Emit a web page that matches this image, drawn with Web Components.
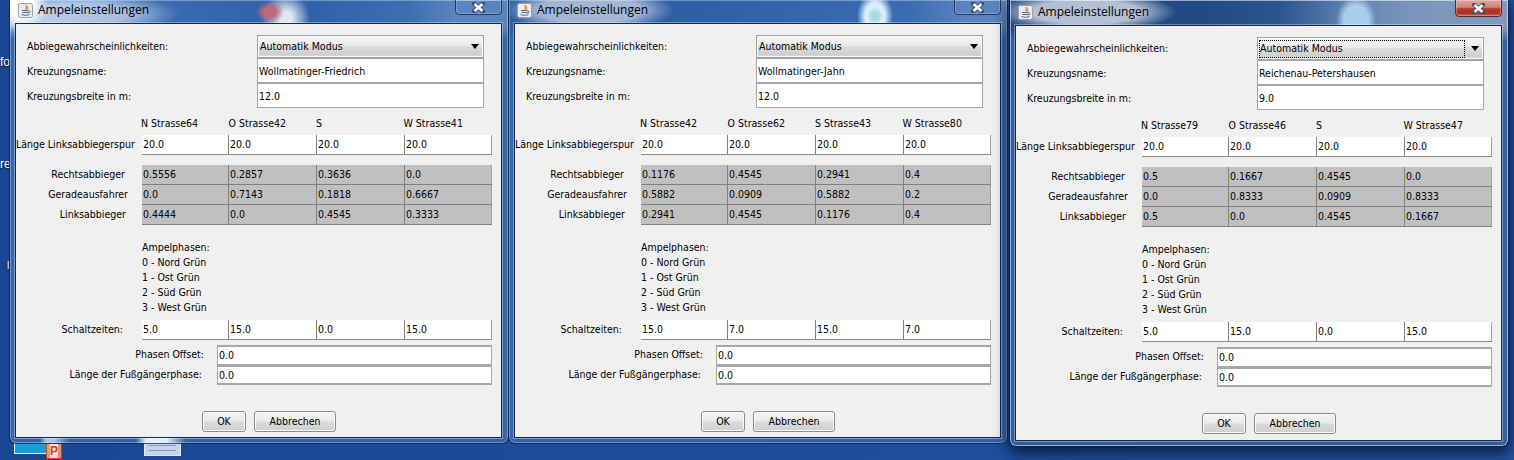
<!DOCTYPE html>
<html lang="de">
<head>
<meta charset="utf-8">
<title>Ampeleinstellungen</title>
<style>
  html, body { margin: 0; height: 100%; overflow: hidden; }
  body {
    background: #1c4a98;
    color: #000;
    font: 10.5px/15px "DejaVu Sans Condensed", "DejaVu Sans", sans-serif;
  }
  desk-top { width: 1514px; height: 460px; }
</style>
</head>
<body>
<desk-top>
  <ampel-window slot="win" caption="Ampeleinstellungen" style="left:10px;width:498px;height:443px;--pad-top:24px;--glass:
      linear-gradient(90deg, transparent 30px, rgba(190,235,255,.75) 36px 44px, transparent 60px 126px, rgba(230,250,255,.95) 136px 156px, transparent 176px) 0 100% / 100% 6px no-repeat,
      linear-gradient(180deg, transparent 26px, #3667ad 40px, #3667ad 437px, #2f5ea5 443px),
      radial-gradient(ellipse 28px 30px at 10px 4px, #fff 45%, transparent),
      radial-gradient(ellipse 14px 11px at 260px 12px, #bd6a78 40%, transparent),
      radial-gradient(ellipse 24px 26px at 276px 18px, rgba(255,255,255,.85) 25%, transparent),
      radial-gradient(ellipse 100px 20px at 70px 14px, rgba(255,255,255,.5) 50%, transparent),
      linear-gradient(90deg, #7ea6da 0, #5f8fcc 70px, #3a6cb2 150px, #2f60a8 290px, #3e6fb3 400px, #5a85be 445px, #5c84bc 498px);">
    <ampel-form name="Wollmatinger-Friedrich" breite="12.0"
      heads="N Strasse64|O Strasse42|S|W Strasse41"
      rechts="0.5556|0.2857|0.3636|0.0" gerade="0.0|0.7143|0.1818|0.6667" links="0.4444|0.0|0.4545|0.3333"
      zeiten="5.0|15.0|0.0|15.0"></ampel-form>
  </ampel-window>

  <ampel-window slot="win" caption="Ampeleinstellungen" style="left:509px;width:498px;height:443px;--pad-top:24px;--glass:
      linear-gradient(180deg, transparent 26px, #3667ad 40px, #3667ad 437px, #2f5ea5 443px),
      radial-gradient(ellipse 8px 9px at 366px 16px, #a6d8e2 40%, transparent),
      radial-gradient(ellipse 18px 24px at 366px 16px, rgba(225,245,255,.95) 55%, transparent),
      radial-gradient(ellipse 85px 22px at 80px 10px, rgba(205,218,235,.72) 60%, transparent),
      linear-gradient(90deg, #2e5c9f 0, #2f5fa4 190px, #3667ad 300px, #3a6cb2 400px, #5a82bc 455px, #5c84bc 498px);">
    <ampel-form name="Wollmatinger-Jahn" breite="12.0"
      heads="N Strasse42|O Strasse62|S Strasse43|W Strasse80"
      rechts="0.1176|0.4545|0.2941|0.4" gerade="0.5882|0.0909|0.5882|0.2" links="0.2941|0.4545|0.1176|0.4"
      zeiten="15.0|7.0|15.0|7.0"></ampel-form>
  </ampel-window>

  <ampel-window slot="win" active caption="Ampeleinstellungen" style="left:1010px;width:498px;height:446px;--pad-top:26px;--title-y:2px;--glass:
      linear-gradient(180deg, transparent 28px, #31609f 42px, #31609f 440px, #2b5a9c 446px),
      radial-gradient(ellipse 20px 24px at 346px 20px, rgba(175,210,240,.95) 60%, transparent),
      radial-gradient(ellipse 90px 20px at 76px 12px, rgba(215,222,232,.8) 60%, transparent),
      linear-gradient(90deg, #24497f 0, #234a85 200px, #2c5590 270px, #5d80b0 335px, #7a96bc 400px, #8299ba 498px);">
    <ampel-form focused name="Reichenau-Petershausen" breite="9.0"
      heads="N Strasse79|O Strasse46|S|W Strasse47"
      rechts="0.5|0.1667|0.4545|0.0" gerade="0.0|0.8333|0.0909|0.8333" links="0.5|0.0|0.4545|0.1667"
      zeiten="5.0|15.0|0.0|15.0"></ampel-form>
  </ampel-window>
</desk-top>

<script>
// desktop behind the dialogs: scraps of icon captions and task icons
const deskTemplate = document.createElement("template");
deskTemplate.innerHTML = `
  <style>
    :host { display: block; position: relative; overflow: hidden; background: linear-gradient(90deg, #1a4793, #1d4c9b 50%, #1f519f); }
    .scrap { position: absolute; left: 0; color: #fff; font: 12px/14px "Liberation Sans", sans-serif; text-shadow: 0 1px 2px #000; }
    .tile { position: absolute; box-sizing: border-box; }
    .cyan { left: 14px; top: 440px; width: 33px; height: 14px; background: linear-gradient(180deg, #1f9bd8, #13a2d6); border: 1px solid #d9f1fb; }
    .ppt { left: 46px; top: 443px; width: 16px; height: 16px; background: linear-gradient(135deg, #f2a278, #e58a5c); border: 1px solid #c8431a; color: #fff; }
    .ppt b { display: block; font: bold 12px/14px "Liberation Sans", sans-serif; text-align: center; color: #c8431a; background: #fbe3d4; margin: 0 3px; }
    .note { left: 144px; top: 438px; width: 37px; height: 18px; background: #c9d3ea; border: 1px solid #e3e9f5; }
    .note::before, .note::after { content: ""; position: absolute; left: 3px; right: 4px; height: 1px; background: #7f97c4; }
    .note::before { top: 6px; }
    .note::after { top: 11px; }
  </style>
  <span class="scrap" style="top:55px">fo</span>
  <span class="scrap" style="top:157px">re</span>
  <span class="scrap" style="top:259px;left:7px;font-size:10px">l</span>
  <div class="tile cyan"></div>
  <div class="tile ppt"><b>P</b></div>
  <div class="tile note"></div>
  <slot name="win"></slot>
`;

class DeskTop extends HTMLElement {
  constructor() {
    super();
    this.attachShadow({ mode: "open" });
    this.shadowRoot.appendChild(deskTemplate.content.cloneNode(true));
  }
}
customElements.define("desk-top", DeskTop);

const windowTemplate = document.createElement("template");
windowTemplate.innerHTML = `
  <style>
    :host {
      display: block;
      position: absolute;
      top: 0;
      box-sizing: border-box;
      padding: var(--pad-top) 7px 6px 6px;
      background: var(--glass);
      border-radius: 0 0 6px 6px;
      box-shadow: 0 0 0 1px rgba(12,32,70,.75), inset 0 0 0 1px rgba(255,255,255,.32);
    }
    :host([active]) {
      box-shadow: 0 0 0 1px rgba(12,32,70,.8), inset 0 0 0 1px rgba(255,255,255,.55), 0 5px 14px 2px rgba(3,12,40,.75);
    }
    .icon { position: absolute; left: 8px; top: calc(3px + var(--title-y, 0px)); width: 15px; height: 15px; }
    .caption {
      position: absolute;
      left: 28px;
      top: calc(2px + var(--title-y, 0px));
      font: 12px/16px "Open Sans", sans-serif;
      color: #000;
      white-space: nowrap;
    }
    .close {
      position: absolute;
      right: 6px;
      top: -1px;
      width: 47px;
      height: calc(16px + var(--title-y, 0px));
      box-sizing: border-box;
      display: flex;
      align-items: center;
      justify-content: center;
      border: 1px solid rgba(25,45,85,.85);
      border-radius: 0 0 4px 4px;
      box-shadow: inset 0 0 0 1px rgba(255,255,255,.22);
    }
    :host([active]) .close {
      border-color: #5b2a25;
      background: linear-gradient(180deg, #d9a79f 0, #cf8378 45%, #b83a2a 55%, #a9301f 80%, #c8604e 100%);
      box-shadow: inset 0 0 0 1px rgba(255,255,255,.3);
    }
    .content {
      height: 100%;
      box-sizing: border-box;
      background: #f0f0f0;
      box-shadow: 0 0 0 1px #16294a, 0 0 0 2px rgba(255,255,255,.35);
    }
  </style>
  <svg class="icon" viewBox="0 0 15 15">
    <rect x=".5" y=".5" width="14" height="14" rx="2" fill="#ececec" stroke="#9aa0a8"/>
    <path d="M8.5 2C7 3.5 9.5 4.5 7.5 6.5M10 3.5C9 4.5 10.5 5 9.5 6.5" fill="none" stroke="#e2701c" stroke-width="1.1"/>
    <path d="M4 7.5h6.5M4.5 9.5h5.5M3.5 11.5c2 1 6 1 8 0M10.5 8c2-.5 2 2 -.5 2" fill="none" stroke="#41648e" stroke-width="1"/>
  </svg>
  <span class="caption"></span>
  <div class="close">
    <svg width="13" height="11" viewBox="0 0 13 11">
      <path d="M2 1.5l9 8M11 1.5l-9 8" stroke="#3a4c6c" stroke-width="4" stroke-linecap="square"/>
      <path d="M2.5 2l8 7M10.5 2l-8 7" stroke="#fff" stroke-width="2.6"/>
    </svg>
  </div>
  <div class="content"><slot></slot></div>
`;

class AmpelWindow extends HTMLElement {
  constructor() {
    super();
    this.attachShadow({ mode: "open" });
    this.shadowRoot.appendChild(windowTemplate.content.cloneNode(true));
  }
  connectedCallback() {
    this.shadowRoot.querySelector(".caption").textContent = this.getAttribute("caption");
  }
}
customElements.define("ampel-window", AmpelWindow);

const comboTemplate = document.createElement("template");
comboTemplate.innerHTML = `
  <style>
    :host {
      display: flex;
      align-items: center;
      box-sizing: border-box;
      height: 24px;
      border: 1px solid #a4a4a4;
      border-bottom-width: 2px;
      box-shadow: inset 0 0 0 1px #f8f8f8;
      background: linear-gradient(180deg, #f6f6f6 0, #ececec 40%, #dadada 55%, #cecece 90%, #e6e6e6 100%);
    }
    .text { flex: 1; padding-left: 1px; margin: 2px 0 2px 1px; height: 18px; line-height: 16px; box-sizing: border-box; }
    :host([focused]) .text { border: 1px dotted #000; line-height: 14px; padding-left: 0; }
    .arrow { width: 18px; display: flex; justify-content: center; flex: none; }
    :host([focused]) .arrow { background: linear-gradient(90deg, #c0c0c0 1px, transparent 1px); }
    svg { display: block; margin-left: 2px; }
  </style>
  <div class="text"><slot></slot></div>
  <div class="arrow"><svg width="8" height="5" viewBox="0 0 8 5"><path d="M0 0h8L4 5z" fill="#000"/></svg></div>
`;

class AmpelCombo extends HTMLElement {
  constructor() {
    super();
    this.attachShadow({ mode: "open" });
    this.shadowRoot.appendChild(comboTemplate.content.cloneNode(true));
  }
}
customElements.define("ampel-combo", AmpelCombo);

const fieldTemplate = document.createElement("template");
fieldTemplate.innerHTML = `
  <style>
    :host {
      display: block;
      box-sizing: border-box;
      padding: 0 1px;
      background: #fff;
      border: 1px solid #a8a8a8;
      white-space: nowrap;
    }
  </style>
  <slot></slot>
`;

class AmpelField extends HTMLElement {
  constructor() {
    super();
    this.attachShadow({ mode: "open" });
    this.shadowRoot.appendChild(fieldTemplate.content.cloneNode(true));
  }
}
customElements.define("ampel-field", AmpelField);

// one row of the four-column tables, white or grey
const cellsTemplate = document.createElement("template");
cellsTemplate.innerHTML = `
  <style>
    :host {
      display: grid;
      grid-template-columns: 87px 88px 88px 87px;
      height: 20px;
      box-sizing: border-box;
      background: #fff;
      border-bottom: 1px solid #8a8a8a;
    }
    :host([grey]) { background: #c0c0c0; border-bottom-color: #808080; }
    span { padding-left: 1px; line-height: 19px; border-right: 1px solid #808080; box-sizing: border-box; }
    span:last-child { border-right-color: #a0a0a0; }
  </style>
`;

class AmpelCells extends HTMLElement {
  static observedAttributes = ["values"];

  constructor() {
    super();
    this.attachShadow({ mode: "open" });
    this.shadowRoot.appendChild(cellsTemplate.content.cloneNode(true));
  }

  attributeChangedCallback(name, oldValue, newValue) {
    this.shadowRoot.querySelectorAll("span").forEach((s) => s.remove());
    for (const v of newValue.split("|")) {
      const cell = document.createElement("span");
      cell.textContent = v;
      this.shadowRoot.appendChild(cell);
    }
  }
}
customElements.define("ampel-cells", AmpelCells);

const buttonTemplate = document.createElement("template");
buttonTemplate.innerHTML = `
  <style>
    :host {
      display: block;
      box-sizing: border-box;
      height: 21px;
      line-height: 19px;
      text-align: center;
      border: 1px solid #8a8a8a;
      border-radius: 3px;
      box-shadow: inset 0 0 0 1px #fbfbfb;
      background: linear-gradient(180deg, #f4f4f4 0, #ebebeb 45%, #dadada 55%, #cfcfcf 100%);
    }
  </style>
  <slot></slot>
`;

class AmpelButton extends HTMLElement {
  constructor() {
    super();
    this.attachShadow({ mode: "open" });
    this.shadowRoot.appendChild(buttonTemplate.content.cloneNode(true));
  }
}
customElements.define("ampel-button", AmpelButton);

const formTemplate = document.createElement("template");
formTemplate.innerHTML = `
  <style>
    :host { display: block; padding-top: 11px; }
    .top { display: grid; grid-template-columns: 241px 227px; grid-template-rows: 24px 25px 24px; }
    .top .lbl { padding-left: 11px; line-height: 24px; }
    .top .lbl:first-child { line-height: 23px; }
    .top ampel-field { line-height: 24px; border-top: 0; border-bottom: 0; }
    .top .name { border-bottom: 2px solid #a8a8a8; }
    .top .breite { border-bottom: 1px solid #a8a8a8; }
    .grid { display: grid; grid-template-columns: 126px 350px; }
    .lbl-r { text-align: right; white-space: nowrap; line-height: 19px; height: 20px; }
    .heads { margin-top: 8px; height: 19px; }
    .heads div { display: grid; grid-template-columns: 87.5px 87.5px 87.5px 87.5px; margin-left: -1px; }
    .g2 { margin-top: 10px; }
    .g2 .lbl-r:nth-of-type(5) { line-height: 18px; }
    .phasen { margin: 15px 0 5px 126px; }
    .bottom { margin-top: 5px; display: grid; grid-template-columns: 201px 275px; }
    .bottom ampel-field { height: 20px; line-height: 19px; border-width: 1px; border-top: 0; }
    .bottom .first { border-top: 2px solid #a8a8a8; line-height: 17px; }
    .bottom .second { border-top: 2px solid #a8a8a8; line-height: 17px; border-bottom-width: 2px; }
    .buttons { margin: 26px 0 0 186px; display: flex; gap: 8px; }
    .ok { width: 44px; }
    .cancel { width: 82px; }
  </style>
  <div class="top">
    <div class="lbl">Abbiegewahrscheinlichkeiten:</div>
    <ampel-combo>Automatik Modus</ampel-combo>
    <div class="lbl">Kreuzungsname:</div>
    <ampel-field class="name"></ampel-field>
    <div class="lbl">Kreuzungsbreite in m:</div>
    <ampel-field class="breite"></ampel-field>
  </div>
  <div class="grid heads"><span></span><div class="hd"></div></div>
  <div class="grid">
    <div class="lbl-r" style="padding-right:8px">Länge Linksabbiegerspur</div>
    <ampel-cells class="spur" values="20.0|20.0|20.0|20.0"></ampel-cells>
  </div>
  <div class="grid g2">
    <div class="lbl-r" style="padding-right:17px">Rechtsabbieger</div>
    <ampel-cells grey class="rechts"></ampel-cells>
    <div class="lbl-r" style="padding-right:14px">Geradeausfahrer</div>
    <ampel-cells grey class="gerade"></ampel-cells>
    <div class="lbl-r" style="padding-right:16px">Linksabbieger</div>
    <ampel-cells grey class="links"></ampel-cells>
  </div>
  <div class="phasen">Ampelphasen:<br>0 - Nord Grün<br>1 - Ost Grün<br>2 - Süd Grün<br>3 - West Grün</div>
  <div class="grid">
    <div class="lbl-r" style="padding-right:19px">Schaltzeiten:</div>
    <ampel-cells class="zeiten"></ampel-cells>
  </div>
  <div class="bottom">
    <div class="lbl-r" style="padding-right:13px">Phasen Offset:</div>
    <ampel-field class="first">0.0</ampel-field>
    <div class="lbl-r" style="padding-right:15px">Länge der Fußgängerphase:</div>
    <ampel-field class="second">0.0</ampel-field>
  </div>
  <div class="buttons">
    <ampel-button class="ok">OK</ampel-button>
    <ampel-button class="cancel">Abbrechen</ampel-button>
  </div>
`;

class AmpelForm extends HTMLElement {
  constructor() {
    super();
    this.attachShadow({ mode: "open" });
    this.shadowRoot.appendChild(formTemplate.content.cloneNode(true));
  }
  connectedCallback() {
    const root = this.shadowRoot;
    root.querySelector(".name").textContent = this.getAttribute("name");
    root.querySelector(".breite").textContent = this.getAttribute("breite");
    root.querySelector(".rechts").setAttribute("values", this.getAttribute("rechts"));
    root.querySelector(".gerade").setAttribute("values", this.getAttribute("gerade"));
    root.querySelector(".links").setAttribute("values", this.getAttribute("links"));
    root.querySelector(".zeiten").setAttribute("values", this.getAttribute("zeiten"));
    if (this.hasAttribute("focused")) root.querySelector("ampel-combo").setAttribute("focused", "");
    const hd = root.querySelector(".hd");
    for (const h of this.getAttribute("heads").split("|")) {
      const s = document.createElement("span");
      s.textContent = h;
      hd.appendChild(s);
    }
  }
}
customElements.define("ampel-form", AmpelForm);
</script>
</body>
</html>
